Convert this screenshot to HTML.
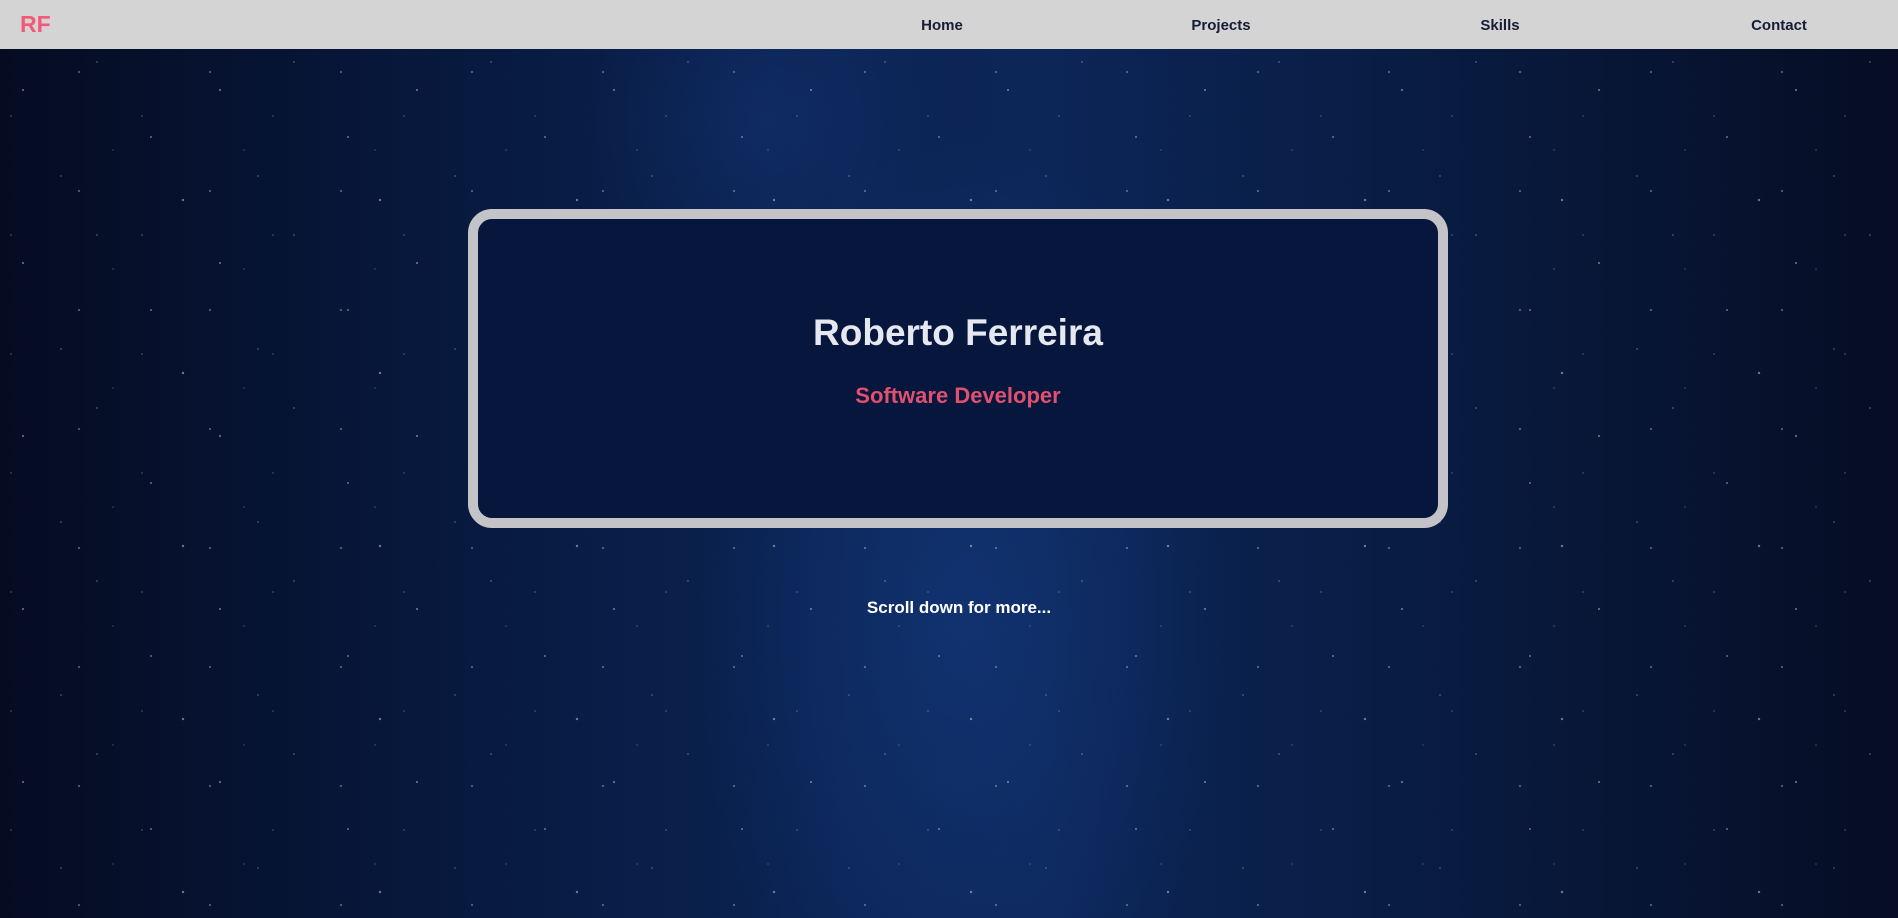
<!DOCTYPE html>
<html><head><meta charset="utf-8"><style>
html,body{margin:0;padding:0;width:1898px;height:918px;overflow:hidden;font-family:"Liberation Sans",sans-serif;}
body{position:relative;background:
radial-gradient(ellipse 380px 700px at 960px 620px, rgba(30,80,170,0.3), transparent 70%),
radial-gradient(ellipse 250px 300px at 760px 120px, rgba(30,70,150,0.25), transparent 70%),
linear-gradient(90deg,#050c22 0%,#07173a 20%,#0b2454 45%,#0c2658 55%,#08193c 80%,#060d24 100%);}
.stars{position:absolute;inset:49px 0 0 0;background-image:
radial-gradient(1.3px 1.3px at 23px 41px,#fff,transparent),
radial-gradient(1px 1px at 97px 13px,#cde,transparent),
radial-gradient(1.2px 1.2px at 151px 88px,#fff,transparent),
radial-gradient(1px 1px at 61px 127px,#bcd,transparent),
radial-gradient(1.5px 1.5px at 183px 151px,#fff,transparent);
background-size:197px 173px;opacity:.8}
.stars2{position:absolute;inset:49px 0 0 0;background-image:
radial-gradient(1px 1px at 11px 67px,#dde,transparent),
radial-gradient(1.4px 1.4px at 79px 23px,#fff,transparent),
radial-gradient(1px 1px at 113px 101px,#abc,transparent);
background-size:131px 119px;opacity:.6}
nav{position:absolute;left:0;top:0;width:1898px;height:49px;background:#d4d4d4;z-index:2}
.logo{position:absolute;left:20px;top:12px;font-size:23px;font-weight:bold;color:#f25a78;line-height:24px}
nav a{position:absolute;top:17px;font-size:15px;font-weight:bold;color:#161c35;text-decoration:none;transform:translateX(-50%);line-height:18px}
.card{position:absolute;left:468px;top:209px;width:960px;height:299px;border:10px solid #c4c4c8;border-radius:24px;background:#06163d;z-index:1}
h1{position:absolute;left:0;right:0;top:93px;margin:0;text-align:center;font-size:37px;color:#e6e8f0;line-height:42px}
h2{position:absolute;left:0;right:0;top:164px;margin:0;text-align:center;font-size:22px;color:#e0506f;line-height:26px}
.scroll{position:absolute;left:0;width:1918px;top:598px;text-align:center;font-size:17px;font-weight:bold;color:#fff;z-index:1;line-height:20px}
</style></head><body>
<div class="stars"></div><div class="stars2"></div>
<nav><span class="logo">RF</span>
<a style="left:942px">Home</a><a style="left:1221px">Projects</a><a style="left:1500px">Skills</a><a style="left:1779px">Contact</a></nav>
<div class="card"><h1>Roberto Ferreira</h1><h2>Software Developer</h2></div>
<div class="scroll">Scroll down for more...</div>
</body></html>
